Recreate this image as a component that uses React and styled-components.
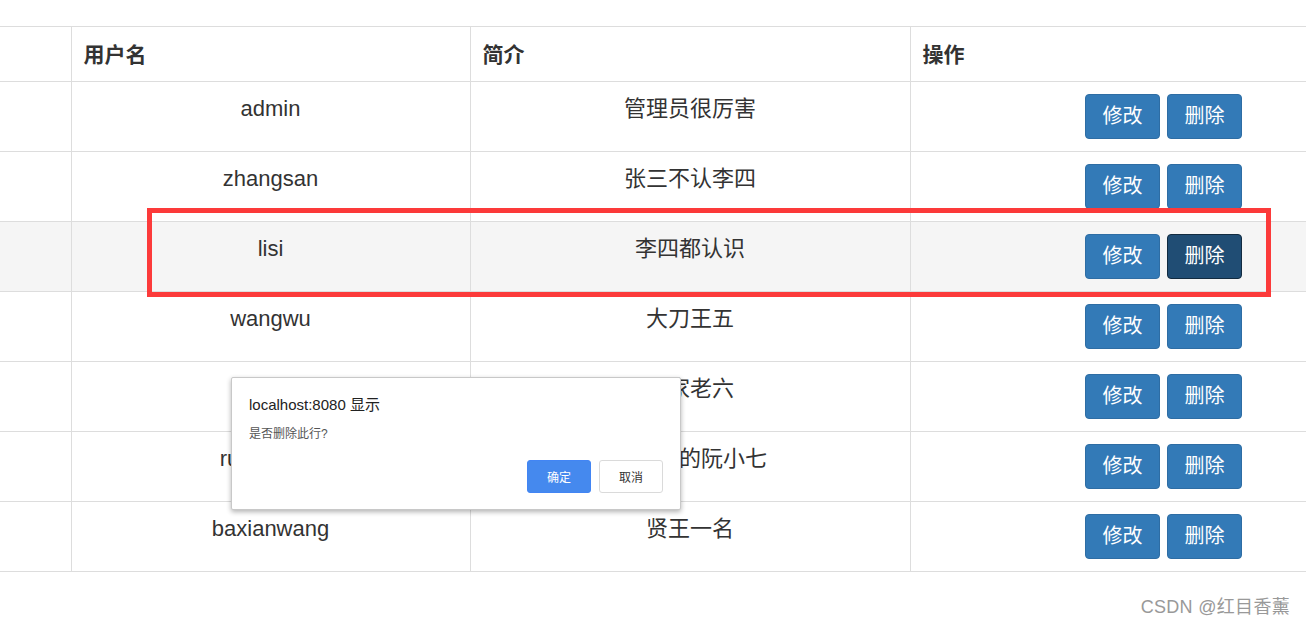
import React from 'react';
import styled, { createGlobalStyle } from 'styled-components';

const GlobalStyle = createGlobalStyle`
  html, body {
    margin: 0;
    padding: 0;
    background: #fff;
    overflow: hidden;
  }
  body {
    font-family: "Liberation Sans", "Noto Sans CJK SC", Arial, sans-serif;
    color: #333;
  }
`;

const Page = styled.div`
  position: relative;
  width: 1306px;
  height: 626px;
  overflow: hidden;
  padding-top: 26px;
  box-sizing: border-box;
`;

const Table = styled.table`
  width: 1417px;
  table-layout: fixed;
  border-collapse: collapse;
`;

const Th = styled.th`
  border: 1px solid #ddd;
  border-left: ${p => (p.$edge ? 'none' : '1px solid #ddd')};
  padding: 0 12px 2px;
  height: 55px;
  box-sizing: border-box;
  text-align: left;
  font-size: 21px;
  font-weight: bold;
  color: #333;
  vertical-align: middle;
`;

const Tr = styled.tr`
  background: ${p => (p.$active ? '#f5f5f5' : '#fff')};
`;

const Td = styled.td`
  border: 1px solid #ddd;
  border-left: ${p => (p.$edge ? 'none' : '1px solid #ddd')};
  padding: 12px;
  height: 45px;
  text-align: center;
  vertical-align: top;
  font-size: 22px;
  line-height: 30px;
  color: #333;
`;

const Button = styled.button`
  display: inline-block;
  font-family: inherit;
  font-size: 20px;
  line-height: 29px;
  height: 45px;
  padding: 0 16px;
  width: 75px;
  color: #fff;
  background: ${p => (p.$pressed ? '#204d74' : '#337ab7')};
  border: 1px solid ${p => (p.$pressed ? '#122b40' : '#2e6da4')};
  border-radius: 4px;
  margin-left: ${p => (p.$first ? '0' : '7px')};
  cursor: pointer;
  vertical-align: top;
`;

const Highlight = styled.div`
  position: absolute;
  left: 147px;
  top: 208px;
  width: 1124px;
  height: 89px;
  border: 5px solid #fc3a3a;
  box-sizing: border-box;
  pointer-events: none;
`;

const Dialog = styled.div`
  position: absolute;
  left: 231px;
  top: 377px;
  width: 450px;
  height: 133px;
  box-sizing: border-box;
  background: #fff;
  border: 1px solid #c8c8c8;
  border-radius: 2px;
  box-shadow: 0 2px 5px rgba(0, 0, 0, 0.3);
  padding: 17px 17px 16px 17px;
  display: flex;
  flex-direction: column;
`;

const DialogTitle = styled.div`
  font-size: 15px;
  line-height: 20px;
  color: #222;
`;

const DialogText = styled.div`
  margin-top: 11px;
  font-size: 12px;
  line-height: 16px;
  color: #555;
`;

const DialogActions = styled.div`
  margin-top: auto;
  display: flex;
  justify-content: flex-end;
  gap: 8px;
`;

const DialogButton = styled.button`
  width: 64px;
  height: 33px;
  font-family: inherit;
  font-size: 12px;
  border-radius: 3px;
  border: 1px solid ${p => (p.$primary ? '#4285f4' : '#dadada')};
  background: ${p => (p.$primary ? '#4589ee' : '#fff')};
  color: ${p => (p.$primary ? '#fff' : '#333')};
`;

const Watermark = styled.div`
  position: absolute;
  right: 16px;
  bottom: 8px;
  font-size: 18px;
  color: #999;
  letter-spacing: 0.3px;
`;

const rows = [
  { name: 'admin', intro: '管理员很厉害' },
  { name: 'zhangsan', intro: '张三不认李四' },
  { name: 'lisi', intro: '李四都认识', active: true },
  { name: 'wangwu', intro: '大刀王五' },
  { name: 'zhaoliu', intro: '赵家老六' },
  { name: 'ruanxiaoqi', intro: '活阎罗的阮小七' },
  { name: 'baxianwang', intro: '贤王一名' },
];

export default function App() {
  return (
    <>
      <GlobalStyle />
      <Page>
        <Table>
          <colgroup>
            <col style={{ width: 71 }} />
            <col style={{ width: 399 }} />
            <col style={{ width: 440 }} />
            <col style={{ width: 507 }} />
          </colgroup>
          <thead>
            <tr>
              <Th $edge />
              <Th>用户名</Th>
              <Th>简介</Th>
              <Th>操作</Th>
            </tr>
          </thead>
          <tbody>
            {rows.map(r => (
              <Tr key={r.name} $active={r.active}>
                <Td $edge />
                <Td>{r.name}</Td>
                <Td>{r.intro}</Td>
                <Td>
                  <Button $first>修改</Button>
                  <Button $pressed={r.active}>删除</Button>
                </Td>
              </Tr>
            ))}
          </tbody>
        </Table>
        <Highlight />
        <Dialog>
          <DialogTitle>localhost:8080 显示</DialogTitle>
          <DialogText>是否删除此行?</DialogText>
          <DialogActions>
            <DialogButton $primary>确定</DialogButton>
            <DialogButton>取消</DialogButton>
          </DialogActions>
        </Dialog>
        <Watermark>CSDN @红目香薰</Watermark>
      </Page>
    </>
  );
}
